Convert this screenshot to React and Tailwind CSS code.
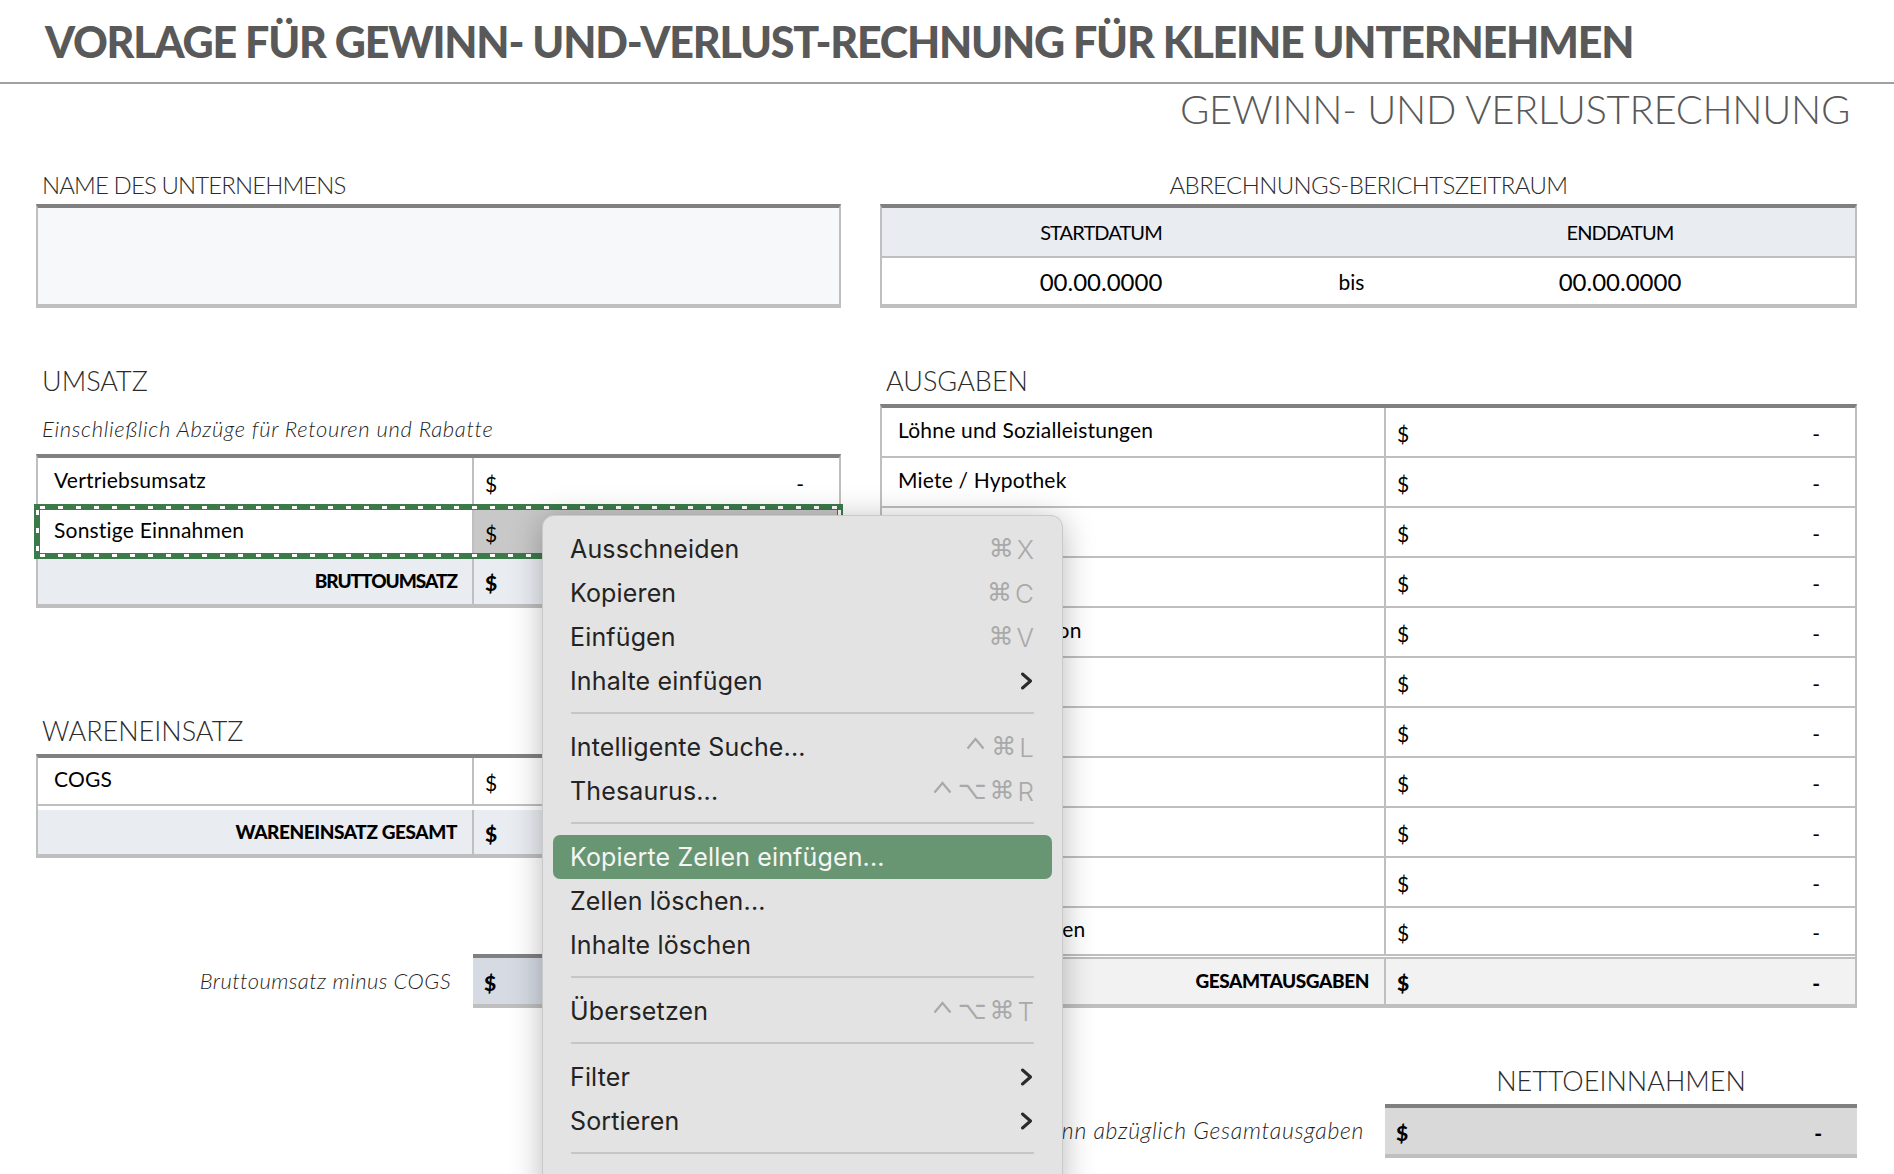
import React from 'react';

const font = 'font-["Lato","Liberation_Sans",sans-serif]';
const tableBox = 'border-x-2 border-b-4 border-t-4 border-x-[#bfbfbf] border-b-[#bfbfbf] border-t-[#808080]';
const ticksX = 'bg-[repeating-linear-gradient(90deg,#fff_0,#fff_5px,transparent_5px,transparent_18px)]';
const ticksY = 'bg-[repeating-linear-gradient(180deg,#fff_0,#fff_5px,transparent_5px,transparent_18px)]';

function Money({ bold, gray }) {
    return (
        <div className={`flex h-full flex-1 items-center justify-between pl-[11px] pr-[35px] pt-[3px] text-[21px] text-black ${bold ? 'font-black' : ''} ${gray ? 'bg-[#c8c8c8]' : ''}`}>
            <span>$</span>
            <span>-</span>
        </div>
    );
}

function Row({ label, width, height = 'h-[50px]', total, tracking = 'tracking-[-0.4px]', bg = '', gray, noBorder }) {
    return (
        <div className={`flex ${height} ${noBorder ? '' : 'border-b-2 border-[#bfbfbf]'} ${bg}`}>
            <div
                className={`flex h-full shrink-0 items-center border-r-2 border-[#bfbfbf] ${width} ${total ? `justify-end pr-[15px] text-[19px] font-black text-black ${tracking}` : 'pb-[4px] pl-[16px] text-[21px] tracking-[0.2px] text-black'}`}
            >
                {label}
            </div>
            <Money bold={total} gray={gray} />
        </div>
    );
}

function SectionHead({ children, center }) {
    return <h2 className={`flex h-[40px] items-center pb-[2px] text-[27px] font-light text-[#2b2b2b] ${center ? 'justify-center' : 'pl-[6px]'}`}>{children}</h2>;
}

const expenses = [
    'Löhne und Sozialleistungen',
    'Miete / Hypothek',
    '',
    '',
    'Vertrieb / Provision',
    '',
    '',
    '',
    '',
    '',
];

function ControlKey() {
    return (
        <svg width="19" height="13" viewBox="0 0 19 13" fill="none" stroke="#a9a9a9" strokeWidth="2.2" className="mb-[7px] mr-[3px]">
            <path d="M1.5 11.5 L9.5 2 L17.5 11.5" />
        </svg>
    );
}

function Shortcut({ keys }) {
    return (
        <span className="flex items-center gap-[3px] text-[26px] text-[#a9a9a9]">
            {keys.split('').map((k, i) =>
                k === '^' ? (
                    <ControlKey key={i} />
                ) : k === '⌘' || k === '⌥' ? (
                    <span key={i} className='font-["DejaVu_Sans",sans-serif] text-[25px]'>{k}</span>
                ) : (
                    <span key={i} className="font-light">{k}</span>
                ),
            )}
        </span>
    );
}

function Menu() {
    const sep = <div className="flex h-[22px] items-center pb-[3px]"><div className="mx-[28px] h-[2px] w-[464px] bg-[#c6c6c6]" /></div>;
    const chevron = (
        <svg width="13" height="18" viewBox="0 0 13 18" fill="none" stroke="#2b2b2b" strokeWidth="3" strokeLinecap="round" strokeLinejoin="round" className="-translate-x-[1px]">
            <path d="M2.5 2 L10.5 9 L2.5 16" />
        </svg>
    );
    const item = (label, right, active) => (
        <div className={`mx-[10px] flex h-[44px] items-center justify-between rounded-[7px] pl-[18px] pr-[18px] ${active ? 'bg-[#689673] text-[#f5f5f5]' : 'text-[#232323]'}`}>
            <span className="-translate-x-[1px] translate-y-[1px] tracking-[0.15px]">{label}</span>
            {right}
        </div>
    );
    return (
        <div className='absolute left-[542px] top-[515px] h-[680px] w-[521px] overflow-hidden rounded-[12px] border border-[#c9c9c9] bg-[#e3e3e3] pt-[11px] font-["Inter",sans-serif] text-[25px] shadow-[0_4px_32px_rgba(0,0,0,0.28)]'>
            {item('Ausschneiden', <Shortcut keys="⌘X" />)}
            {item('Kopieren', <Shortcut keys="⌘C" />)}
            {item('Einfügen', <Shortcut keys="⌘V" />)}
            {item('Inhalte einfügen', chevron)}
            {sep}
            {item('Intelligente Suche...', <Shortcut keys="^⌘L" />)}
            {item('Thesaurus...', <Shortcut keys="^⌥⌘R" />)}
            {sep}
            {item('Kopierte Zellen einfügen...', null, true)}
            {item('Zellen löschen...')}
            {item('Inhalte löschen')}
            {sep}
            {item('Übersetzen', <Shortcut keys="^⌥⌘T" />)}
            {sep}
            {item('Filter', chevron)}
            {item('Sortieren', chevron)}
            {sep}
        </div>
    );
}

export default function App() {
    return (
        <div className={`relative h-[1174px] w-[1894px] overflow-hidden bg-white ${font}`}>
            <header className="flex h-[84px] items-start border-b-2 border-[#a0a0a0] pl-[45px] pt-[17px]">
                <h1 className="text-[43px] font-black leading-[50px] tracking-[-1.2px] text-[#595959]">
                    VORLAGE FÜR GEWINN- UND-VERLUST-RECHNUNG FÜR KLEINE UNTERNEHMEN
                </h1>
            </header>
            <div className="flex h-[84px] justify-end pr-[44px]">
                <p className="text-[40px] font-light leading-[50px] tracking-[-0.3px] text-[#595959]">GEWINN- UND VERLUSTRECHNUNG</p>
            </div>

            <div className="ml-[36px] flex w-[1821px] gap-[39px]">
                {/* left column */}
                <div className="w-[805px] shrink-0">
                    <div className="flex h-[36px] items-center pb-[2px] pl-[6px] text-[24px] font-light tracking-[-0.9px] text-[#2b2b2b]">NAME DES UNTERNEHMENS</div>
                    <div className={`h-[104px] bg-[#f7f8fa] ${tableBox}`} />

                    <div className="mt-[54px] h-[42px]"><SectionHead>UMSATZ</SectionHead></div>
                    <p className="flex h-[50px] items-center pb-[2px] pl-[6px] text-[22px] font-light italic tracking-[0.65px] text-[#1f1f1f]">Einschließlich Abzüge für Retouren und Rabatte</p>
                    <div className={`relative h-[154px] ${tableBox}`}>
                        <Row label="Vertriebsumsatz" width="w-[436px]" />
                        <Row label="Sonstige Einnahmen" width="w-[436px]" gray />
                        <Row label="BRUTTOUMSATZ" width="w-[436px]" height="h-[46px]" total tracking="tracking-[-1px]" bg="bg-[#e9ecf1]" noBorder />
                        <div className="pointer-events-none absolute -left-[4px] -right-[4px] top-[46px] h-[55px] border-[6px] border-[#3c7a4a]">
                            <div className={`absolute -top-[4px] left-0 right-0 h-[3px] ${ticksX}`} />
                            <div className={`absolute -bottom-[4px] left-0 right-0 h-[3px] ${ticksX}`} />
                            <div className={`absolute -left-[4px] bottom-0 top-0 w-[3px] ${ticksY}`} />
                            <div className={`absolute -right-[4px] bottom-0 top-0 w-[3px] ${ticksY}`} />
                        </div>
                    </div>

                    <div className="mt-[104px] h-[42px]"><SectionHead>WARENEINSATZ</SectionHead></div>
                    <div className={`h-[104px] ${tableBox}`}>
                        <Row label="COGS" width="w-[436px]" height="h-[48px]" />
                        <div className="h-[4px]" />
                        <Row label="WARENEINSATZ GESAMT" width="w-[436px]" height="h-[44px]" total bg="bg-[#e9ecf1]" noBorder />
                    </div>

                    <div className="mt-[96px] flex h-[54px]">
                        <div className="flex w-[437px] items-center justify-end pb-[2px] pr-[22px] text-[22px] font-light italic tracking-[0.4px] text-[#1f1f1f]">Bruttoumsatz minus COGS</div>
                        <div className="flex-1 border-b-4 border-t-4 border-b-[#bfbfbf] border-t-[#808080] bg-[#d5dae3]">
                            <Money bold />
                        </div>
                    </div>
                </div>

                {/* right column */}
                <div className="w-[977px] shrink-0">
                    <div className="flex h-[36px] items-center justify-center pb-[2px] text-[24px] font-light tracking-[-0.6px] text-[#2b2b2b]">ABRECHNUNGS-BERICHTSZEITRAUM</div>
                    <div className={`h-[104px] ${tableBox}`}>
                        <div className="grid h-[50px] grid-cols-[438px_65px_1fr] items-center border-b-2 border-[#bfbfbf] bg-[#e9ecf1] text-center text-[20px] tracking-[-0.9px] text-black">
                            <span>STARTDATUM</span>
                            <span />
                            <span>ENDDATUM</span>
                        </div>
                        <div className="grid h-[46px] grid-cols-[438px_65px_1fr] items-center pt-[1px] text-center text-[24px] text-black">
                            <span>00.00.0000</span>
                            <span className="-translate-x-[1px] text-[21px]">bis</span>
                            <span>00.00.0000</span>
                        </div>
                    </div>

                    <div className="mt-[54px] h-[42px]"><SectionHead>AUSGABEN</SectionHead></div>
                    <div className={`h-[604px] ${tableBox}`}>
                        {expenses.map((label, i) => (
                            <Row key={i} label={label} width="w-[504px]" />
                        ))}
                        <Row label="Sonstige Leistungen" width="w-[504px]" height="h-[48px]" />
                        <div className="h-[1px]" />
                        <Row label="GESAMTAUSGABEN" width="w-[504px]" height="h-[47px]" total bg="border-t-2 border-[#bfbfbf] bg-[#f2f2f2]" noBorder />
                    </div>

                    <div className="ml-[505px] mt-[54px] h-[42px]"><SectionHead center>NETTOEINNAHMEN</SectionHead></div>
                    <div className="flex h-[54px]">
                        <div className="flex w-[505px] items-center justify-end pb-[2px] pr-[21px] text-[23px] font-light italic tracking-[0.7px] text-[#1f1f1f]">Bruttogewinn abzüglich Gesamtausgaben</div>
                        <div className="flex-1 border-b-4 border-t-4 border-b-[#bfbfbf] border-t-[#808080] bg-[#d9d9d9]">
                            <Money bold />
                        </div>
                    </div>
                </div>
            </div>

            <Menu />
        </div>
    );
}
